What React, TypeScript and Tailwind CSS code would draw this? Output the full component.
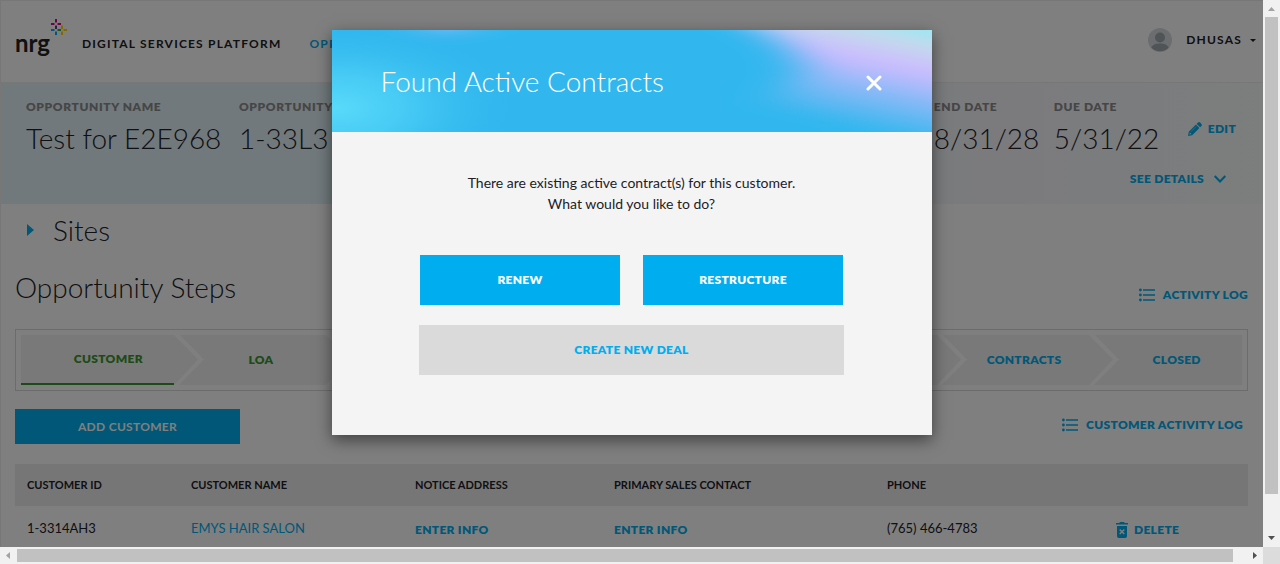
import type { ReactNode } from "react";

const steps = ["Customer", "LOA", "", "", "", "", "Contracts", "Closed"];

function Logo() {
  return (
    <a href="#home" aria-label="nrg home" className="flex items-start text-[#222]">
      <span className="mt-[8px] text-2xl leading-8 font-bold">nrg</span>
      <svg width="18" height="17" viewBox="0 0 18 17" strokeWidth="2" fill="none" aria-hidden="true">
        <path d="M6 0v3.500M1 5h3.500M7.500 5H11" stroke="#e6007e" />
        <path d="M6 6.500V10" stroke="#5b3a96" />
        <path d="M1 11h3.500M6 12.500V16" stroke="#00aeef" />
        <path d="M7.500 11H11" stroke="#3fa535" />
        <path d="M12 6.500V10M13.500 11H17M12 12.500V16" stroke="#ffd200" />
      </svg>
    </a>
  );
}

function ListIcon() {
  return (
    <svg width="16" height="14" viewBox="0 0 16 14" fill="currentColor" aria-hidden="true">
      <circle cx="1.4" cy="2" r="1.4" />
      <circle cx="1.4" cy="7" r="1.4" />
      <circle cx="1.4" cy="12" r="1.4" />
      <path d="M4 1.2h12v1.6H4zM4 6.2h12v1.6H4zM4 11.2h12v1.6H4z" />
    </svg>
  );
}

function PencilIcon() {
  return (
    <svg width="14" height="14" viewBox="0 0 14 14" fill="currentColor" aria-hidden="true">
      <path d="M10 0.600a1.500 1.500 0 0 1 2.100 0l1.300 1.300a1.500 1.500 0 0 1 0 2.100l-1.300 1.300L8.700 1.900zM8 2.600l3.400 3.400-7.200 7.200L0 14l0.800-4.200zM1.900 10.500l-0.500 2.100 2.100-0.500z" fillRule="evenodd" />
      <path d="M8.200 4.500L3 9.700" stroke="#fff" strokeOpacity="0.5" strokeWidth="0.8" />
    </svg>
  );
}

function TrashIcon() {
  return (
    <svg width="12" height="16" viewBox="0 0 12 16" fill="currentColor" aria-hidden="true">
      <path d="M4 0h4l0.800 1H12v1.600H0V1h3.200z" />
      <path d="M1 4h10v10.200A1.800 1.800 0 0 1 9.200 16H2.800A1.800 1.800 0 0 1 1 14.200z" />
      <path d="M3.700 7.500l4.600 4.600M8.300 7.500l-4.600 4.600" stroke="#fff" strokeWidth="1.4" />
    </svg>
  );
}

function Chevron() {
  return (
    <svg className="absolute top-0 left-0" width="30" height="50" viewBox="0 0 30 50" aria-hidden="true">
      <path d="M0 0h6l24 24.500L5 50H0l24-25.500z" fill="#fff" />
    </svg>
  );
}

function Field({ label, value, className }: { label: string; value: string; className: string }) {
  return (
    <div className={`shrink-0 whitespace-nowrap ${className}`}>
      <dt className="text-xs leading-4 font-extrabold tracking-wider text-[#8c8c8c] uppercase">{label}</dt>
      <dd className="mt-[3px] text-[28px] leading-10 font-light">{value}</dd>
    </div>
  );
}

function LinkButton({ children, className = "" }: { children: ReactNode; className?: string }) {
  return (
    <button type="button" className={`flex items-center text-xs leading-4 font-extrabold tracking-wide text-[#00aeef] uppercase ${className}`}>
      {children}
    </button>
  );
}

function Page() {
  return (
    <div className="border-l border-[#eee]">
      <header className="flex h-[83px] border-t border-b border-[#eee] pr-[7px] pl-[14px]">
        <div className="flex items-start pt-[18px]">
          <Logo />
          <span className="mt-[17px] ml-[14px] text-xs leading-4 font-bold tracking-widest uppercase">Digital Services Platform</span>
          <a href="#opportunities" className="mt-[17px] ml-[28px] text-xs leading-4 font-bold tracking-widest text-[#00aeef] uppercase">
            Opportunities
          </a>
        </div>
        <button type="button" className="mt-[27px] ml-auto flex h-6 items-center text-xs font-bold tracking-widest uppercase">
          <svg width="24" height="24" viewBox="0 0 24 24" aria-hidden="true">
            <circle cx="12" cy="12" r="12" fill="#d6dade" />
            <circle cx="12" cy="9.500" r="5" fill="#a0a8ae" />
            <path d="M3.300 19.500c2-3.500 5-4 8.700-4s6.700 0.500 8.700 4a12 12 0 0 1-17.400 0z" fill="#a0a8ae" />
          </svg>
          <span className="ml-[14px]">dhusas</span>
          <svg className="ml-2" width="6" height="3" viewBox="0 0 6 3" aria-hidden="true">
            <path d="M0 0h6L3 3z" fill="#222" />
          </svg>
        </button>
      </header>

      <section className="h-[121px] bg-linear-to-r from-[#e3f2f8] from-25% via-[#f7f7fb] via-80% to-[#f8fbfb] pt-4 pl-[25px]">
        <div className="flex">
          <dl className="flex flex-1">
            <Field label="Opportunity Name" value="Test for E2E968" className="w-[213px]" />
            <Field label="Opportunity ID" value="1-33L3" className="w-[213px]" />
            <Field label="End Date" value="8/31/28" className="ml-auto w-[120px]" />
            <Field label="Due Date" value="5/31/22" className="w-[134px]" />
          </dl>
          <LinkButton className="mt-[22px] mr-[27px] h-4 gap-[6px]">
            <PencilIcon />
            Edit
          </LinkButton>
        </div>
        <LinkButton className="mt-[13px] mr-[37px] ml-auto gap-[10px]">
          See Details
          <svg width="12" height="8" viewBox="0 0 12 8" fill="none" stroke="currentColor" strokeWidth="2" aria-hidden="true">
            <path d="M0.700 1L6 6.500 11.300 1" />
          </svg>
        </LinkButton>
      </section>

      <main className="pr-[15px] pl-[14px]">
        <h2 className="flex h-[52px] items-center pl-3 text-[28px] font-light">
          <button type="button" aria-label="Expand sites" className="mr-[19px]">
            <svg width="7" height="12" viewBox="0 0 7 12" aria-hidden="true">
              <path d="M0 0l7 6-7 6z" fill="#00aeef" />
            </svg>
          </button>
          Sites
        </h2>
        <div className="flex h-[73px] justify-between">
          <h2 className="pt-[11px] text-[28px] leading-10 font-light">Opportunity Steps</h2>
          <LinkButton className="mt-[31px] h-4 gap-2">
            <ListIcon />
            Activity Log
          </LinkButton>
        </div>

        <ol className="flex border border-[#d8d8d8] p-[5px]">
          {steps.map((label, i) => (
            <li
              key={i}
              className={`relative flex h-[50px] flex-1 items-center justify-center bg-[#f2f2f2] pl-[22px] text-xs font-extrabold tracking-wide uppercase ${
                i === 0 ? "border-b-2 border-[#3b962f]" : ""
              } ${i < 2 ? "text-[#3b962f]" : "text-[#00aeef]"}`}
            >
              {i > 0 && <Chevron />}
              {label}
            </li>
          ))}
        </ol>

        <div className="mt-[18px] flex justify-between">
          <button type="button" className="h-[35px] w-[225px] bg-[#00aeef] text-xs font-bold tracking-wide text-white uppercase">
            Add Customer
          </button>
          <LinkButton className="mt-2 mr-[5px] h-4 gap-2">
            <ListIcon />
            Customer Activity Log
          </LinkButton>
        </div>

        <table className="mt-5 w-full table-fixed text-left">
          <colgroup>
            <col className="w-[164px]" />
            <col className="w-[224px]" />
            <col className="w-[199px]" />
            <col className="w-[273px]" />
            <col className="w-[229px]" />
            <col />
          </colgroup>
          <thead className="h-[42px] bg-[#ededed] text-[11px] font-extrabold uppercase">
            <tr>
              <th className="pl-3">Customer ID</th>
              <th className="pl-3">Customer Name</th>
              <th className="pl-3">Notice Address</th>
              <th className="pl-3">Primary Sales Contact</th>
              <th className="pl-3">Phone</th>
              <th aria-label="Actions" />
            </tr>
          </thead>
          <tbody>
            <tr className="h-[46px] text-[13px]">
              <td className="pl-3">1-3314AH3</td>
              <td className="pl-3">
                <a href="#customer" className="text-[#00aeef]">EMYS HAIR SALON</a>
              </td>
              <td className="pt-[2px] pl-3">
                <LinkButton>Enter Info</LinkButton>
              </td>
              <td className="pt-[2px] pl-3">
                <LinkButton>Enter Info</LinkButton>
              </td>
              <td className="pl-3">(765) 466-4783</td>
              <td className="pt-[2px] pl-3">
                <LinkButton className="gap-[6px]">
                  <TrashIcon />
                  Delete
                </LinkButton>
              </td>
            </tr>
          </tbody>
        </table>
      </main>
    </div>
  );
}

function ContractsDialog() {
  return (
    <div
      role="dialog"
      aria-modal="true"
      aria-labelledby="dialog-title"
      className="h-[405px] w-[600px] bg-[#f4f4f4] shadow-[0_5px_15px_rgba(0,0,0,0.5)]"
    >
      <div className="relative flex h-[102px] items-center justify-between overflow-hidden bg-[#31b7ee] pr-[50px] pl-[49px] text-white">
        <svg className="absolute inset-0 h-full w-full" viewBox="0 0 600 102" preserveAspectRatio="none" aria-hidden="true">
          <defs>
            <radialGradient id="glow">
              <stop offset="0" stopColor="#58dafa" />
              <stop offset="0.350" stopColor="#50d2f7" stopOpacity="0.750" />
              <stop offset="1" stopColor="#31b7ee" stopOpacity="0" />
            </radialGradient>
            <radialGradient id="haze">
              <stop offset="0" stopColor="#68b8f2" />
              <stop offset="1" stopColor="#31b7ee" stopOpacity="0" />
            </radialGradient>
            <linearGradient id="sheen" gradientUnits="userSpaceOnUse" x1="576" y1="-14" x2="552" y2="104">
              <stop offset="0" stopColor="#86ebfa" />
              <stop offset="0.200" stopColor="#c2dcea" />
              <stop offset="0.420" stopColor="#cdbcff" />
              <stop offset="0.700" stopColor="#7fb9f6" />
              <stop offset="1" stopColor="#31b7ee" />
            </linearGradient>
            <filter id="soft" x="-40%" y="-60%" width="180%" height="220%">
              <feGaussianBlur stdDeviation="24 5" />
            </filter>
          </defs>
          <ellipse cx="5" cy="78" rx="185" ry="90" fill="url(#glow)" />
          <ellipse cx="115" cy="-2" rx="80" ry="18" fill="url(#haze)" />
          <path d="M390 -40H720V122H640L440 76Q450 62 468 42Q474 18 410 -8z" fill="url(#sheen)" filter="url(#soft)" />
        </svg>
        <h1 id="dialog-title" className="relative text-[28px] leading-10 font-light">Found Active Contracts</h1>
        <button type="button" aria-label="Close" className="relative mt-1">
          <svg width="16" height="16" viewBox="0 0 16 16" stroke="#fff" strokeWidth="3" strokeLinecap="round" aria-hidden="true">
            <path d="M2 2l12 12M14 2L2 14" />
          </svg>
        </button>
      </div>
      <p className="pt-10 text-center text-sm leading-[21px]">
        There are existing active contract(s) for this customer.
        <br />
        What would you like to do?
      </p>
      <div className="mx-auto mt-[41px] flex w-[425px] flex-col gap-5 text-xs tracking-wide uppercase">
        <div className="flex justify-between px-px">
          <button type="button" className="h-[50px] w-[200px] bg-[#00aeef] font-extrabold text-white uppercase">Renew</button>
          <button type="button" className="h-[50px] w-[200px] bg-[#00aeef] font-extrabold text-white uppercase">Restructure</button>
        </div>
        <button type="button" className="h-[50px] bg-[#dadada] font-extrabold text-[#00aeef] uppercase">Create New Deal</button>
      </div>
    </div>
  );
}

export default function App() {
  return (
    <div className="flex h-screen flex-col overflow-hidden bg-white font-['Lato',sans-serif] text-[#1d2126]">
      <div className="flex min-h-0 flex-1">
        <div className="relative min-w-0 flex-1 overflow-hidden">
          <Page />
          <div className="absolute inset-0 flex items-start justify-center bg-black/50 pt-[30px]">
            <ContractsDialog />
          </div>
        </div>
        <div aria-hidden="true" className="flex w-[17px] flex-col items-center bg-[#f1f1f1]">
          <svg width="17" height="17" viewBox="0 0 17 17">
            <path d="M5 11h7L8.500 7z" fill="#a3a3a3" />
          </svg>
          <div className="mb-9 w-[13px] flex-1 bg-[#c1c1c1]" />
          <svg className="shrink-0" width="17" height="17" viewBox="0 0 17 17">
            <path d="M5 6h7L8.500 10z" fill="#505050" />
          </svg>
        </div>
      </div>
      <div aria-hidden="true" className="flex h-[17px] items-center bg-[#f1f1f1]">
        <svg width="17" height="17" viewBox="0 0 17 17">
          <path d="M10 5v7L6 8.500z" fill="#a3a3a3" />
        </svg>
        <div className="mr-[13px] h-[13px] flex-1 bg-[#c1c1c1]" />
        <svg width="17" height="17" viewBox="0 0 17 17">
          <path d="M7 5v7l4-3.500z" fill="#505050" />
        </svg>
        <div className="size-[17px] bg-[#dcdcdc]" />
      </div>
    </div>
  );
}
